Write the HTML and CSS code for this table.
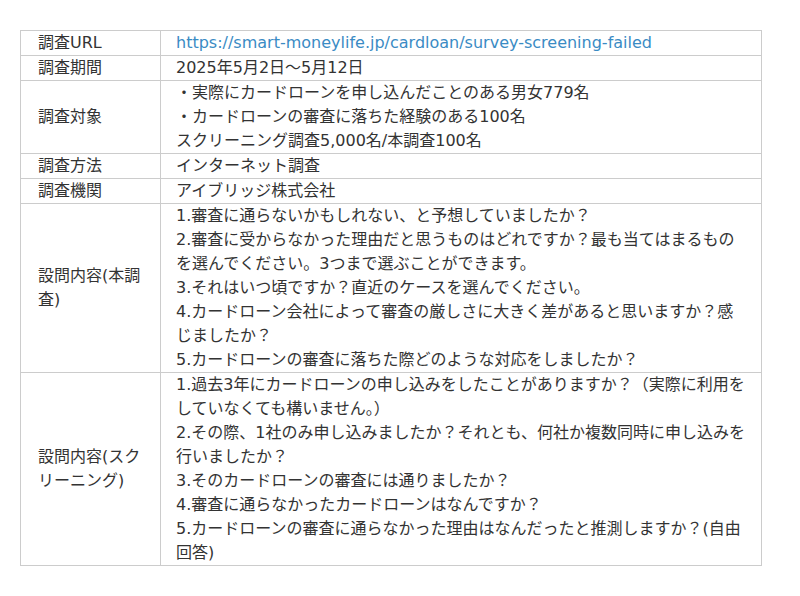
FILE: index.html
```html
<!DOCTYPE html>
<html lang="ja">
<head>
<meta charset="utf-8">
<link rel="stylesheet" href="styles.css">
</head>
<body>
<table class="survey">
  <tr><th>調査URL</th><td><a class="link" href="#">https://smart-moneylife.jp/cardloan/survey-screening-failed</a></td></tr>
  <tr><th>調査期間</th><td>2025年5月2日～5月12日</td></tr>
  <tr><th>調査対象</th><td>・実際にカードローンを申し込んだことのある男女779名<br>・カードローンの審査に落ちた経験のある100名<br>スクリーニング調査5,000名/本調査100名</td></tr>
  <tr><th>調査方法</th><td>インターネット調査</td></tr>
  <tr><th>調査機関</th><td>アイブリッジ株式会社</td></tr>
  <tr><th>設問内容(本調査)</th><td>1.審査に通らないかもしれない、と予想していましたか？<br>2.審査に受からなかった理由だと思うものはどれですか？最も当てはまるものを選んでください。3つまで選ぶことができます。<br>3.それはいつ頃ですか？直近のケースを選んでください。<br>4.カードローン会社によって審査の厳しさに大きく差があると思いますか？感じましたか？<br>5.カードローンの審査に落ちた際どのような対応をしましたか？</td></tr>
  <tr><th>設問内容(スクリーニング)</th><td>1.過去3年にカードローンの申し込みをしたことがありますか？（実際に利用をしていなくても構いません。）<br>2.その際、1社のみ申し込みましたか？それとも、何社か複数同時に申し込みを行いましたか？<br>3.そのカードローンの審査には通りましたか？<br>4.審査に通らなかったカードローンはなんですか？<br>5.カードローンの審査に通らなかった理由はなんだったと推測しますか？(自由回答)</td></tr>
</table>
</body>
</html>
```

FILE: styles.css
```css
html, body {
  margin: 0;
  padding: 0;
  background: #ffffff;
}
body {
  padding: 30px 20px;
  font-family: "DejaVu Sans", "Noto Sans CJK JP", sans-serif;
  font-size: 16px;
  line-height: 24px;
  color: #333333;
}
.survey {
  border-collapse: collapse;
  width: 742px;
}
.survey th,
.survey td {
  border: 1px solid #cccccc;
  text-align: left;
  font-weight: normal;
  vertical-align: middle;
}
.survey th {
  width: 106px;
  padding: 0 16px 0 17px;
}
.survey td {
  padding: 0 13px 0 15px;
}
.link {
  color: #3a8bc4;
  text-decoration: none;
}
```
